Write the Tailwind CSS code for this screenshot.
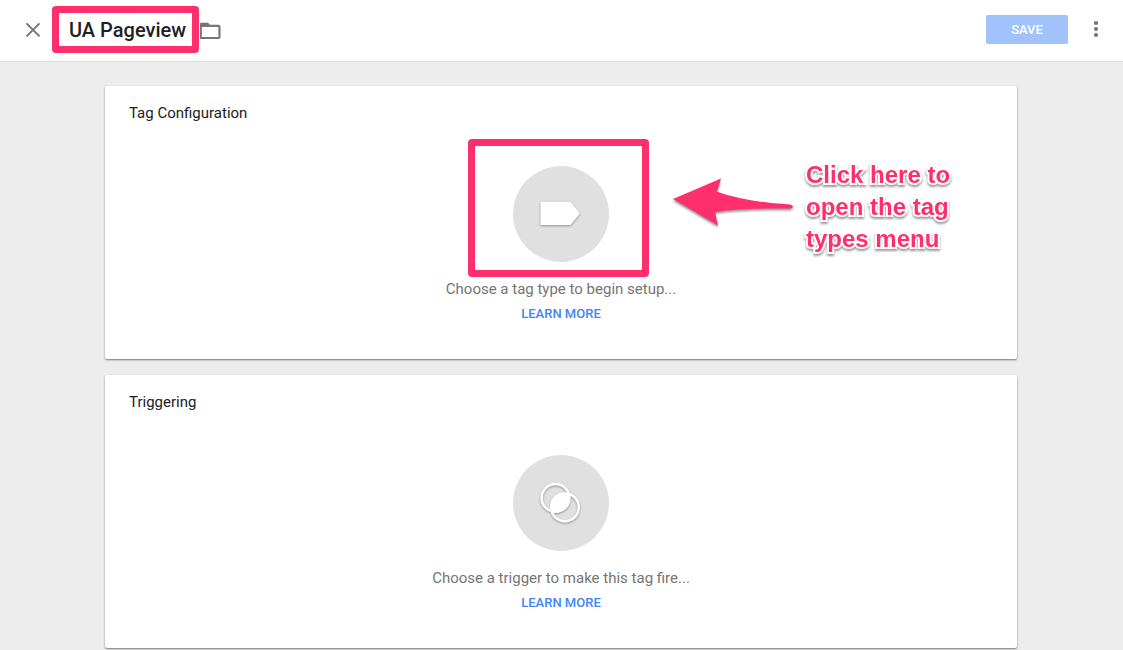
<!DOCTYPE html>
<html lang="en">
<head>
<meta charset="utf-8">
<meta name="viewport" content="width=device-width, initial-scale=1">
<title>UA Pageview</title>
<script src="https://cdn.jsdelivr.net/npm/@tailwindcss/browser@4"></script>
</head>
<body class="min-h-screen overflow-x-hidden bg-[#ededed] font-['Roboto',sans-serif] text-[#212121]">
<header class="flex items-center border-b border-[#dedede] bg-white pt-1 pr-[15px] pb-[5px] pl-5">
  <button type="button" aria-label="Close" class="my-3 flex size-7 items-center justify-center">
    <svg class="size-7" viewBox="0 0 28 28" fill="none" stroke="#757575" stroke-width="1.9"><path d="M6.500 7.300 19.500 20.300M19.500 7.300 6.500 20.300"/></svg>
  </button>
  <div class="relative ml-5">
    <input type="text" aria-label="Tag name" value="UA Pageview" class="block h-10 w-32 bg-transparent pl-px text-xl font-medium outline-none">
    <div class="pointer-events-none absolute -top-1 -left-4 h-[47px] w-[147px] rounded-[4px] border-[7px] border-[#ff2f6e]"></div>
  </div>
  <button type="button" aria-label="Folder" class="ml-1">
    <svg class="h-5 w-6" viewBox="0 0 24 20"><path fill="#757575" fill-rule="evenodd" d="M1.500 2.800h6.500l2 2h8.500a2 2 0 0 1 2 2v10.200a2 2 0 0 1-2 2h-17a2 2 0 0 1-2-2v-12.200a2 2 0 0 1 2-2zM1.800 6.900v10.100h16.600v-10.100z"/></svg>
  </button>
  <button type="button" class="mb-px ml-auto h-[29px] w-[82px] rounded-xs bg-[#a1c2fa] text-[13px] font-medium text-white">SAVE</button>
  <button type="button" aria-label="More actions" class="ml-4">
    <svg class="size-6" viewBox="0 0 24 24" fill="#757575"><circle cx="12" cy="5" r="2.100"/><circle cx="12" cy="11" r="2.100"/><circle cx="12" cy="17" r="2.100"/></svg>
  </button>
</header>
<main class="mx-auto flex max-w-[961px] flex-col gap-4 pt-6 pr-[25px] pl-6">
  <section class="rounded-xs bg-white px-6 pt-4 pb-[35px] shadow-[0_1px_2px_rgba(0,0,0,0.5)]">
    <h2 class="text-[15px] leading-[22px]">Tag Configuration</h2>
    <div class="flex flex-col items-center pt-[42px]">
      <div class="relative">
        <button type="button" aria-label="Choose a tag type" class="flex size-24 items-center justify-center rounded-full bg-[#e0e0e0]">
          <svg class="size-12 drop-shadow-[0_1px_1px_rgba(0,0,0,0.35)]" viewBox="0 0 48 48" fill="#fff"><path d="M3.500 12h30l9.500 11.500L33.500 35H3.500z"/></svg>
        </button>
        <div class="pointer-events-none absolute -top-[27px] -left-[45px] h-[138px] w-[181px] rounded-[4px] border-[7px] border-[#ff2f6e]"></div>
        <div class="pointer-events-none absolute -top-[7px] left-[157px] flex w-72 items-start">
          <svg class="mt-[7px] h-16 w-32 shrink-0 drop-shadow-[0_2px_1px_rgba(0,0,0,0.4)]" viewBox="0 0 128 64" fill="#ff2f6e"><path d="M3 33 51 12.500 47 25.500C66 33 94 37 120 38.500Q123 39 123 40.500T120 42.500C92 42 66 43 45 46L48 59.500z"/></svg>
          <p class="ml-2 text-2xl leading-8 font-bold whitespace-nowrap text-[#ff2f6e] [font-family:'Liberation_Sans',sans-serif] [paint-order:stroke_fill] [-webkit-text-stroke:4px_white] drop-shadow-[0_2px_1px_rgba(0,0,0,0.4)]">Click here to<br>open the tag<br>types menu</p>
        </div>
      </div>
      <p class="mt-4 text-[15px] leading-[22px] text-[#757575]">Choose a tag type to begin setup...</p>
      <a href="#" class="mt-1 text-[13px] leading-5 font-medium text-[#4285f4]">LEARN MORE</a>
    </div>
  </section>
  <section class="rounded-xs bg-white px-6 pt-4 pb-[35px] shadow-[0_1px_2px_rgba(0,0,0,0.5)]">
    <h2 class="text-[15px] leading-[22px]">Triggering</h2>
    <div class="flex flex-col items-center pt-[42px]">
      <button type="button" aria-label="Choose a trigger" class="flex size-24 items-center justify-center rounded-full bg-[#e0e0e0]">
        <svg class="size-12 drop-shadow-[0_1px_1px_rgba(0,0,0,0.35)]" viewBox="0 0 48 48" fill="none" stroke="#fff" stroke-width="2.500"><circle cx="18.500" cy="18.900" r="13.900"/><circle cx="27.900" cy="28.300" r="13.900"/><path fill="#fff" stroke="none" d="M32.300 14.500A14.500 14.500 0 0 0 14.100 32.700A14.500 14.500 0 0 0 32.300 14.500z"/></svg>
      </button>
      <p class="mt-4 text-[15px] leading-[22px] text-[#757575]">Choose a trigger to make this tag fire...</p>
      <a href="#" class="mt-1 text-[13px] leading-5 font-medium text-[#4285f4]">LEARN MORE</a>
    </div>
  </section>
</main>
</body>
</html>
